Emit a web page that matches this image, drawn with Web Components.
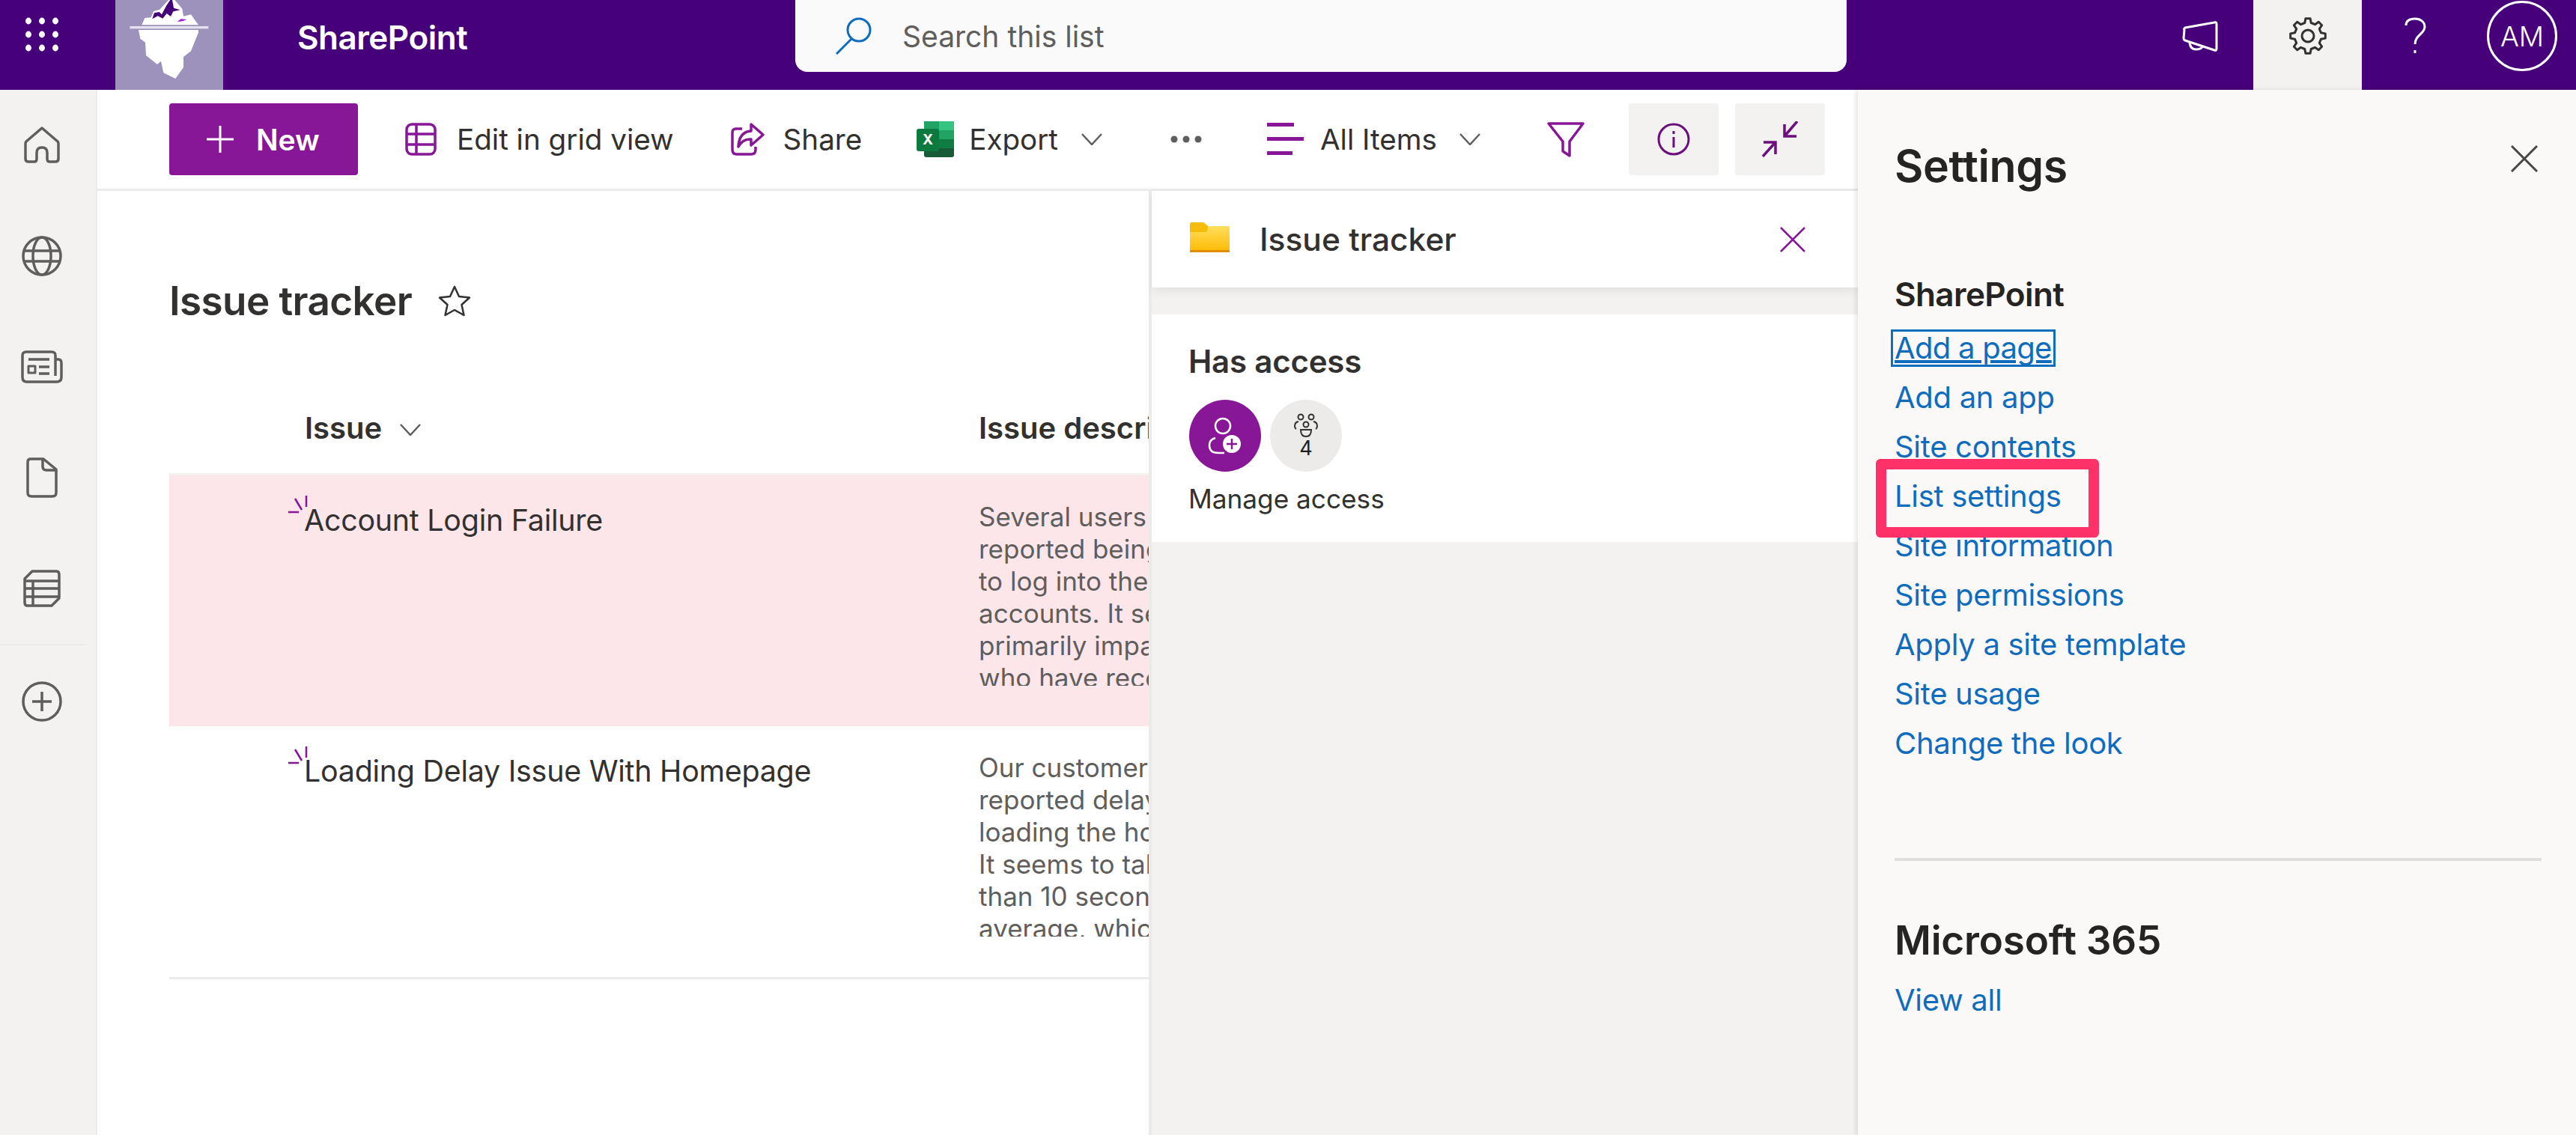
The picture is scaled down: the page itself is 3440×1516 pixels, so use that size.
<!DOCTYPE html>
<html>
<head>
<meta charset="utf-8">
<title>Issue tracker</title>
<style>
	html,body {margin:0;padding:0;height:100%;overflow:hidden;background:#fff;font-family:Inter,"Liberation Sans",sans-serif;color:#323130;}
</style>
</head>
<body>
<sp-app></sp-app>
<script>
function gearPath(cx,cy,r1,r2,teeth){
	let d = "";
	for (let i=0;i<teeth;i++){
		let a = i/teeth*Math.PI*2;
		let s = Math.PI*2/teeth;
		let pts = [[r1,a-s*0.30],[r2,a-s*0.17],[r2,a+s*0.17],[r1,a+s*0.30]];
		for (let p of pts){
			d += (d==""?"M":"L")+(cx+Math.cos(p[1])*p[0]).toFixed(1)+" "+(cy+Math.sin(p[1])*p[0]).toFixed(1);
		}
	}
	return d+"Z";
}

class SpTopbar extends HTMLElement {
	constructor(){
		super();
		this.attachShadow({mode:"open"});
		let dots = "";
		for (let y of [8,26,44]){
			for (let x of [8,26,44]){
				dots += `<ellipse cx="${x}" cy="${y}" rx="4" ry="4.4" fill="#fff"/>`;
			}
		}
		this.shadowRoot.innerHTML = `
			<style>
				:host {display:flex;align-items:flex-start;height:120px;background:#46007a;color:#fff;position:relative;}
				.waffle {width:154px;height:120px;flex:none;}
				.waffle svg {display:block;margin:20px 0 0 30px;}
				.logo {width:144px;height:120px;flex:none;background:#9d92bb;}
				.logo svg {display:block;}
				.brand {font-size:44px;font-weight:600;letter-spacing:-.5px;line-height:50px;margin:25px 0 0 99px;width:665px;flex:none;}
				.search {width:1404px;height:96px;flex:none;background:#fafafa;border-radius:0 0 16px 16px;display:flex;align-items:center;color:#605e5c;font-size:39px;box-sizing:border-box;padding-left:52px;}
				.search svg {margin-right:39px;}
				.right {flex:1;display:flex;height:120px;}
				.mega {margin-left:448px;margin-top:28px;}
				.gear {width:145px;height:120px;margin-left:47px;background:#f3f2f1;display:flex;justify-content:center;padding-top:23px;box-sizing:border-box;}
				.help {margin-left:56px;margin-top:23px;}
				.avatar {width:94px;height:94px;box-sizing:border-box;border:3px solid #fff;border-radius:50%;margin-left:81px;margin-top:1px;display:flex;align-items:center;justify-content:center;font-size:37px;font-weight:300;}
			</style>
			<div class="waffle"><svg width="52" height="52">${dots}</svg></div>
			<div class="logo">
				<svg width="144" height="120" viewBox="0 0 432 360">
					<path fill="#fff" d="M106 100L118 72L143 70L153 45L178 38L213 0L238 0L268 35L273 65L303 58L333 100Z"/>
					<path fill="#46007a" d="M148 76L156 52L176 48L186 58L205 22L220 0L228 0L234 32L260 40L232 46L222 66L206 54L190 74L170 64Z"/>
					<path fill="#a020e0" d="M248 88L262 76L286 78L272 84Z"/>
					<rect x="58" y="105" width="315" height="10" fill="#e6e1f0"/>
					<path fill="#fff" d="M93 120L333 120L333 130L303 205L273 228L273 270L241 315L193 292L183 245L168 258L123 222L120 170L100 155Z"/>
				</svg>
			</div>
			<div class="brand">SharePoint</div>
			<div class="search">
				<svg width="52" height="50" viewBox="0 0 52 50" fill="none" stroke="#0f6cbd" stroke-width="3"><circle cx="33" cy="17" r="15"/><path d="M23 29L3 49"/></svg>
				<span>Search this list</span>
			</div>
			<div class="right">
				<svg class="mega" width="48" height="42" viewBox="0 0 48 42" fill="none" stroke="#fff" stroke-width="3" stroke-linejoin="round"><path d="M3 12Q2 10 4 9L43 2Q46 1 46 4L46 37Q46 40 43 39L4 26Q2 25 2 23Z"/><path d="M10 27Q10 38 19 38Q26 38 28 33"/></svg>
				<div class="gear"><svg width="50" height="50" viewBox="0 0 50 50" fill="none" stroke="#323130" stroke-width="3" stroke-linejoin="round"><path d="${gearPath(25,25,18,23.5,8)}"/><circle cx="25" cy="25" r="8"/></svg></div>
				<svg class="help" width="30" height="50" viewBox="0 0 30 50" fill="none" stroke="#fff" stroke-width="3"><path d="M3 11C3 4 9 2 15 2C22 2 28 6 28 13C28 22 15 24 15 36"/><rect x="13.500" y="44" width="3" height="4" fill="#fff" stroke="none"/></svg>
				<div class="avatar">AM</div>
			</div>
		`;
	}
}
customElements.define("sp-topbar",SpTopbar);

class SpRail extends HTMLElement {
	constructor(){
		super();
		this.attachShadow({mode:"open"});
		this.shadowRoot.innerHTML = `
			<style>
				:host {display:block;width:130px;flex:none;box-sizing:border-box;background:#f3f2f1;border-right:2px solid #edebe9;}
				.slot {height:148px;display:flex;align-items:center;justify-content:center;padding-right:16px;}
				svg {fill:none;stroke:#605e5c;stroke-width:3.500;display:block;}
				.sep {height:2px;width:115px;background:#edebe9;}
				.add {margin-top:1px;}
			</style>
			<div class="slot"><svg width="48" height="50" viewBox="0 0 48 50" stroke-linejoin="round"><path d="M24 2L45 20Q46 21 46 23L46 43Q46 47 42 47L34 47Q31 47 31 43L31 35Q31 28 24 28Q17 28 17 35L17 43Q17 47 14 47L6 47Q2 47 2 43L2 23Q2 21 3 20Z"/></svg></div>
			<div class="slot"><svg width="54" height="54" viewBox="0 0 54 54"><circle cx="27" cy="27" r="25"/><ellipse cx="27" cy="27" rx="12" ry="25"/><path d="M2 20H52M2 34H52"/></svg></div>
			<div class="slot"><svg width="56" height="44" viewBox="0 0 56 44" stroke-linejoin="round"><path d="M46 12H50Q54 12 54 17V36Q54 42 47 42H8Q2 42 2 36V7Q2 2 7 2H41Q46 2 46 7V34"/><path d="M10 12H38M24 22H38M24 31H38"/><rect x="10" y="21" width="9" height="9" stroke-width="3"/></svg></div>
			<div class="slot"><svg width="42" height="54" viewBox="0 0 42 54" stroke-linejoin="round"><path d="M6 2H23L40 16V47Q40 52 35 52H7Q2 52 2 47V6Q2 2 6 2Z"/><path d="M22 2V12Q22 17 27 17H40"/></svg></div>
			<div class="slot"><svg width="50" height="50" viewBox="0 0 50 50" stroke-linejoin="round"><path d="M12 2H44Q48 2 48 6V38L38 48H6Q2 48 2 44V12Z"/><path d="M2 15H48M2 25H48M2 36H48M13 15V48"/></svg></div>
			<div class="sep"></div>
			<div class="slot add"><svg width="54" height="54" viewBox="0 0 54 54"><circle cx="27" cy="27" r="25"/><path d="M27 14V40M14 27H40"/></svg></div>
		`;
	}
}
customElements.define("sp-rail",SpRail);

class SpToolbar extends HTMLElement {
	constructor(){
		super();
		this.attachShadow({mode:"open"});
		this.shadowRoot.innerHTML = `
			<style>
				:host {display:flex;align-items:center;height:135px;box-sizing:border-box;border-bottom:3px solid #edebe9;padding:0 0 0 96px;font-size:38.6px;color:#323130;}
				.new {width:252px;height:96px;box-sizing:border-box;background:#881798;color:#fff;border-radius:4px;display:flex;align-items:center;padding-left:50px;font-weight:600;font-size:39px;flex:none;}
				.new svg {margin-right:30px;}
				.it {display:flex;align-items:center;flex:none;}
				.tile {width:120px;height:96px;background:#f3f2f1;border-radius:4px;display:flex;align-items:center;justify-content:center;flex:none;}
				svg {display:block;flex:none;}
			</style>
			<div class="new"><svg width="36" height="36" fill="none" stroke="#fff" stroke-width="3"><path d="M18 0V36M0 18H36"/></svg>New</div>
			<div class="it" style="margin-left:63px"><svg width="42" height="44" viewBox="0 0 42 44" fill="none" stroke="#881798" stroke-width="3.500" style="margin-right:27px"><rect x="2" y="2" width="38" height="40" rx="7"/><path d="M2 15H40M2 29H40M15 2V42"/></svg>Edit in grid view</div>
			<div class="it" style="margin-left:75px"><svg width="46" height="46" viewBox="0 0 46 46" fill="none" stroke="#881798" stroke-width="3.500" stroke-linejoin="round" style="margin-right:25px"><path d="M16 9H8Q3 9 3 14V37Q3 43 9 43H28Q34 43 34 37V33"/><path d="M28 3L44 17L28 31V23Q17 22 11 33Q12 13 28 12Z"/></svg>Share</div>
			<div class="it" style="margin-left:73px">
				<svg width="50" height="48" viewBox="0 0 50 48" style="margin-right:20px">
					<rect x="10" y="0" width="40" height="48" rx="3" fill="#185c37"/>
					<rect x="10" y="0" width="20" height="12" fill="#21a366"/><rect x="30" y="0" width="20" height="12" fill="#33c481"/>
					<rect x="10" y="12" width="20" height="12" fill="#107c41"/><rect x="30" y="12" width="20" height="12" fill="#21a366"/>
					<rect x="30" y="24" width="20" height="12" fill="#107c41"/>
					<rect x="0" y="10" width="30" height="30" rx="3" fill="#0c7a3f"/>
					<text x="15" y="31" text-anchor="middle" font-family="Inter,sans-serif" font-size="19" font-weight="700" fill="#fff">X</text>
				</svg>Export
				<svg width="28" height="16" viewBox="0 0 28 16" fill="none" stroke="#605e5c" stroke-width="2.500" style="margin-left:31px"><path d="M1 1L14 15L27 1"/></svg>
			</div>
			<div class="it" style="margin-left:91px"><svg width="42" height="10" fill="#605e5c"><circle cx="5" cy="5" r="4.500"/><circle cx="21" cy="5" r="4.500"/><circle cx="37" cy="5" r="4.500"/></svg></div>
			<div class="it" style="margin-left:87px"><svg width="50" height="44" fill="#881798" style="margin-right:21px"><rect x="0" y="0" width="36" height="5"/><rect x="0" y="19" width="49" height="5"/><rect x="0" y="38" width="34" height="5"/></svg>All Items
				<svg width="28" height="16" viewBox="0 0 28 16" fill="none" stroke="#605e5c" stroke-width="2.500" style="margin-left:30px"><path d="M1 1L14 15L27 1"/></svg>
			</div>
			<div class="it" style="margin-left:89px"><svg width="50" height="48" viewBox="0 0 50 48" fill="none" stroke="#881798" stroke-width="3.500" stroke-linejoin="round"><path d="M2 3H48L30 27V46L21 40V27Z"/></svg></div>
			<div class="tile" style="margin-left:59px"><svg width="44" height="44" viewBox="0 0 44 44" fill="none" stroke="#6b0f7d" stroke-width="3"><circle cx="22" cy="22" r="20"/><path d="M22 19V33M22 11V15"/></svg></div>
			<div class="tile" style="margin-left:22px"><svg width="50" height="48" viewBox="0 0 50 48" fill="none" stroke="#6b0f7d" stroke-width="3.500"><path d="M48 0L31 20M31 4V20H47M2 47L19 28M3 28H19V44"/></svg></div>
		`;
	}
}
customElements.define("sp-toolbar",SpToolbar);

class SpRow extends HTMLElement {
	constructor(){
		super();
		this.attachShadow({mode:"open"});
		this.shadowRoot.innerHTML = `
			<style>
				:host {display:grid;grid-template-columns:900px 1fr;height:335px;padding-left:181px;box-sizing:border-box;}
				:host([pink]) {background:#fde6ea;}
				.title {position:relative;font-size:39.4px;line-height:48px;padding-top:36px;letter-spacing:-0.25px;color:#323130;margin-left:-1px;}
				svg {position:absolute;left:-21px;top:26px;}
				.desc {margin-top:34px;height:247px;overflow:hidden;font-size:35px;line-height:43px;color:#605e5c;white-space:pre;}
			</style>
			<div class="title"><svg width="26" height="26" fill="none" stroke="#881798" stroke-width="2.500"><path d="M24 1V16M9 5L18 20M0 23H14"/></svg><slot name="title"></slot></div>
			<div class="desc"><slot></slot></div>
		`;
	}
}
customElements.define("sp-row",SpRow);

class SpList extends HTMLElement {
	constructor(){
		super();
		this.attachShadow({mode:"open"});
		this.shadowRoot.innerHTML = `
			<style>
				:host {display:block;width:1404px;flex:none;overflow:hidden;box-sizing:border-box;padding-left:96px;position:relative;}
				h1 {margin:116px 0 0;font-size:53px;line-height:62px;font-weight:600;letter-spacing:-0.6px;color:#323130;display:flex;align-items:center;}
				h1 svg {margin-left:35px;}
				.head {display:grid;grid-template-columns:900px 1fr;padding-left:181px;height:86px;margin-top:116px;box-sizing:border-box;border-bottom:3px solid #f3f2f1;font-size:40px;font-weight:600;line-height:46px;white-space:nowrap;width:1400px;}
				.head span {display:flex;align-items:flex-start;}
				.head svg {margin:17px 0 0 24px;}
				.rows {border-bottom:3px solid #edebe9;width:1400px;}
			</style>
			<h1>Issue tracker<svg width="44" height="42" viewBox="0 0 44 42" fill="none" stroke="#323130" stroke-width="2.500" stroke-linejoin="round"><path d="M22 2L28 15L42 16.500L31.500 26L34.500 40L22 33L9.500 40L12.500 26L2 16.500L16 15Z"/></svg></h1>
			<div class="head"><span>Issue<svg width="28" height="16" viewBox="0 0 28 16" fill="none" stroke="#605e5c" stroke-width="2.500"><path d="M1 1L14 15L27 1"/></svg></span><span>Issue description</span></div>
			<div class="rows"><slot></slot></div>
		`;
	}
}
customElements.define("sp-list",SpList);

class SpDetails extends HTMLElement {
	constructor(){
		super();
		this.attachShadow({mode:"open"});
		this.shadowRoot.innerHTML = `
			<style>
				:host {display:block;flex:1;background:#f3f2f1;border-left:4px solid #edebe9;box-sizing:border-box;min-width:0;}
				.hd {height:129px;background:#fff;display:flex;align-items:center;padding:0 70px 0 51px;box-shadow:0 4px 12px rgba(0,0,0,.08);position:relative;font-size:42.5px;font-weight:500;}
				.hd span {flex:1;margin-left:40px;}
				.hd svg:first-child {margin-top:-6px;}
				.card {margin-top:36px;height:304px;background:#fff;padding:40px 0 0 49px;box-sizing:border-box;}
				h2 {margin:0;font-size:42px;font-weight:600;line-height:46px;letter-spacing:-.2px;}
				.circles {display:flex;gap:12px;margin-top:28px;margin-left:1px;}
				.c {width:96px;height:96px;border-radius:50%;display:flex;flex-direction:column;align-items:center;justify-content:center;box-sizing:border-box;}
				.c.a {background:#881798;}
				.c.b {background:#edebe9;font-size:27px;line-height:30px;color:#201f1e;padding-top:2px;}
				.m {font-size:35.2px;line-height:42px;margin-top:15px;color:#323130;}
				svg {display:block;}
			</style>
			<div class="hd">
				<svg width="53" height="40" viewBox="0 0 53 40"><defs><linearGradient id="fg" x1="0" y1="0" x2="0" y2="1"><stop offset="0" stop-color="#ffe46b"/><stop offset="1" stop-color="#ffb900"/></linearGradient></defs><path d="M0 3Q0 0 3 0H18L24 5H53V38Q53 40 51 40H2Q0 40 0 38Z" fill="url(#fg)"/><path d="M0 3Q0 0 3 0H18L24 5V8Q24 13 20 13H0Z" fill="#f5b800" opacity=".9"/><rect y="37" width="53" height="3" fill="#e08e00"/></svg>
				<span>Issue tracker</span>
				<svg width="34" height="34" fill="none" stroke="#881798" stroke-width="2.500"><path d="M1 1L33 33M33 1L1 33"/></svg>
			</div>
			<div class="card">
				<h2>Has access</h2>
				<div class="circles">
					<div class="c a"><svg width="46" height="50" viewBox="0 0 46 50" fill="none" stroke="#fff" stroke-width="2.500"><circle cx="20" cy="12" r="10"/><path d="M10 28Q2 30 2 38Q2 48 14 48H22"/><circle cx="32" cy="36" r="12" fill="#fff" stroke="none"/><path d="M32 29V43M25 36H39" stroke="#881798"/></svg></div>
					<div class="c b"><svg width="32" height="32" viewBox="0 0 32 32" fill="none" stroke="#323130" stroke-width="2"><circle cx="9" cy="5" r="3.500"/><circle cx="23" cy="5" r="3.500"/><circle cx="16" cy="15" r="3.500"/><path d="M6 11Q1 12 1 17Q1 20 3 21M26 11Q31 12 31 17Q31 20 29 21M9 22H23Q23 31 16 31Q9 31 9 22Z"/></svg>4</div>
				</div>
				<div class="m">Manage access</div>
			</div>
		`;
	}
}
customElements.define("sp-details",SpDetails);

class SpLink extends HTMLElement {
	constructor(){
		super();
		this.attachShadow({mode:"open"});
		this.shadowRoot.innerHTML = `
			<style>
				:host {display:block;height:66px;font-size:40px;letter-spacing:-.3px;line-height:66px;color:#0f6cbd;position:relative;white-space:nowrap;}
				:host([focus]) a {text-decoration:underline;outline:3px solid #106ebe;outline-offset:0;padding:0 2px;margin-left:-2px;line-height:44px;display:inline-block;letter-spacing:-.7px;}
			</style>
			<a><slot></slot></a>
		`;
	}
}
customElements.define("sp-link",SpLink);

class SpSettings extends HTMLElement {
	constructor(){
		super();
		this.attachShadow({mode:"open"});
		this.shadowRoot.innerHTML = `
			<style>
				:host {display:block;width:959px;flex:none;box-sizing:border-box;background:#faf9f8;padding:0 46px 0 49px;box-shadow:-3px 0 6px rgba(0,0,0,.1);position:relative;}
				.t {display:flex;align-items:center;justify-content:space-between;padding-top:66px;font-size:59px;font-weight:600;line-height:72px;color:#252423;letter-spacing:-.4px;}
				.t svg {margin-right:5px;margin-top:-20px;}
				h3 {margin:109px 0 0;font-size:44px;font-weight:600;line-height:52px;letter-spacing:-.6px;color:#252423;}
				.links {margin-top:13px;}
				hr {border:0;height:4px;background:#e1dfdd;margin:120px 0 0;}
				h4 {margin:74px 0 0;font-size:53px;font-weight:600;line-height:64px;color:#252423;letter-spacing:-.2px;}
				.v {margin-top:15px;}
				.mark {position:absolute;left:24px;top:493px;width:298px;height:105px;box-sizing:border-box;border:14px solid #ff3169;border-radius:6px;}
			</style>
			<div class="t">Settings<svg width="36" height="36" fill="none" stroke="#484644" stroke-width="3"><path d="M1 1L35 35M35 1L1 35"/></svg></div>
			<h3>SharePoint</h3>
			<div class="links">
				<sp-link focus>Add a page</sp-link>
				<sp-link>Add an app</sp-link>
				<sp-link>Site contents</sp-link>
				<sp-link>List settings</sp-link>
				<sp-link>Site information</sp-link>
				<sp-link>Site permissions</sp-link>
				<sp-link>Apply a site template</sp-link>
				<sp-link>Site usage</sp-link>
				<sp-link>Change the look</sp-link>
			</div>
			<hr>
			<h4>Microsoft 365</h4>
			<div class="v"><sp-link>View all</sp-link></div>
			<div class="mark"></div>
		`;
	}
}
customElements.define("sp-settings",SpSettings);

class SpApp extends HTMLElement {
	constructor(){
		super();
		this.attachShadow({mode:"open"});
		this.shadowRoot.innerHTML = `
			<style>
				:host {display:flex;flex-direction:column;height:1516px;width:3440px;overflow:hidden;}
				.main {flex:1;display:flex;min-height:0;}
				.mid {flex:1;display:flex;flex-direction:column;min-width:0;}
				.under {flex:1;display:flex;min-height:0;}
			</style>
			<sp-topbar></sp-topbar>
			<div class="main">
				<sp-rail></sp-rail>
				<div class="mid">
					<sp-toolbar></sp-toolbar>
					<div class="under">
						<sp-list>
							<sp-row pink><span slot="title">Account Login Failure</span>Several users have
reported being unable
to log into their
accounts. It seems to
primarily impact users
who have recently</sp-row>
							<sp-row><span slot="title">Loading Delay Issue With Homepage</span>Our customers have
reported delays when
loading the homepage.
It seems to take more
than 10 seconds on
average, which is too</sp-row>
						</sp-list>
						<sp-details></sp-details>
					</div>
				</div>
				<sp-settings></sp-settings>
			</div>
		`;
	}
}
customElements.define("sp-app",SpApp);
</script>
</body>
</html>
